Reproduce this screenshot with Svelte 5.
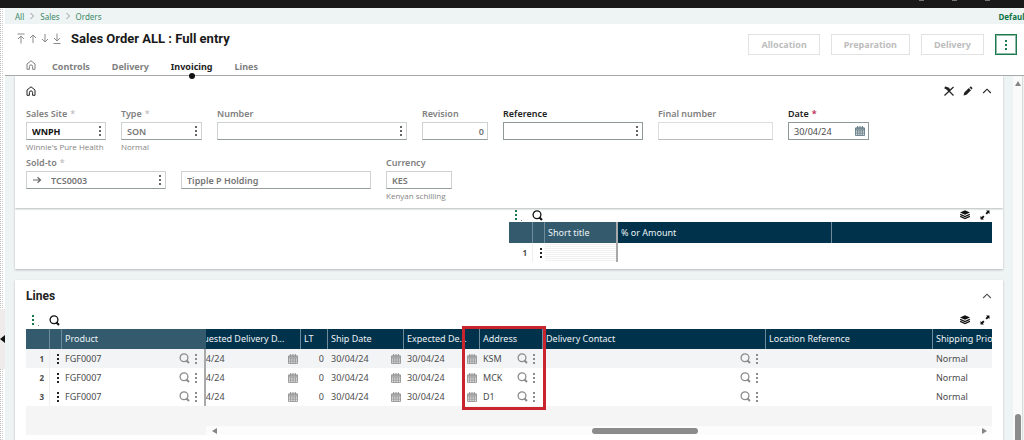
<script>
    import { onMount } from 'svelte';

    const crumbs = ['All', 'Sales', 'Orders'];
    const tabs = ['Controls', 'Delivery', 'Invoicing', 'Lines'];
    const actions = ['Allocation', 'Preparation', 'Delivery'];

    const firstRow = [
        { id: 'site', label: 'Sales Site', value: 'WNPH', help: "Winnie's Pure Health", size: 'w80', star: true, menu: true, look: 'strong' },
        { id: 'type', label: 'Type', value: 'SON', help: 'Normal', size: 'w81', star: true, menu: true },
        { id: 'number', label: 'Number', value: '', size: 'w190', menu: true },
        { id: 'revision', label: 'Revision', value: '0', size: 'w66', look: 'right' },
        { id: 'reference', label: 'Reference', value: '', size: 'w140', menu: true, look: 'editable' },
        { id: 'final', label: 'Final number', value: '', size: 'w115', look: 'faint' },
        { id: 'date', label: 'Date', value: '30/04/24', size: 'w81', star: true, calendar: true, look: 'editable' }
    ];

    const secondRow = [
        { id: 'soldto', label: 'Sold-to', value: 'TCS0003', size: 'w140', star: true, menu: true, arrow: true },
        { id: 'soldname', label: '', aria: 'Sold-to name', value: 'Tipple P Holding', size: 'w190' },
        { id: 'currency', label: 'Currency', value: 'KES', help: 'Kenyan schilling', size: 'w66' }
    ];

    const lines = [
        { product: 'FGF0007', requested: '30/04/24', lt: 0, ship: '30/04/24', expected: '30/04/24', address: 'KSM', priority: 'Normal' },
        { product: 'FGF0007', requested: '30/04/24', lt: 0, ship: '30/04/24', expected: '30/04/24', address: 'MCK', priority: 'Normal' },
        { product: 'FGF0007', requested: '30/04/24', lt: 0, ship: '30/04/24', expected: '30/04/24', address: 'D1', priority: 'Normal' }
    ];

    let activeTab = $state('Invoicing');
    let scroller;

    // start with the first column partly scrolled out
    onMount(() => {
        scroller.scrollLeft = 22;
    });
</script>

{#snippet dots()}
    <svg class="dots" viewBox="0 0 4 12" width="4" height="12" fill="currentColor">
        <rect x="1" y="1" width="2" height="2" /><rect x="1" y="5" width="2" height="2" /><rect x="1" y="9" width="2" height="2" />
    </svg>
{/snippet}

{#snippet house()}
    <svg viewBox="0 0 10 10" width="10" height="10" fill="none" stroke="currentColor">
        <path d="M1 9.300V4L5 .8 9 4v5.300H6.600V6.500a1.600 1.600 0 0 0-3.200 0v2.800z" />
    </svg>
{/snippet}

{#snippet search()}
    <svg viewBox="0 0 11 11" width="11" height="11" fill="none" stroke="currentColor" stroke-width="1.300">
        <circle cx="5" cy="4.800" r="3.900" /><path d="M7.200 7.200l2.800 2.800" stroke-width="2" />
    </svg>
{/snippet}

{#snippet calendar()}
    <svg class="cal" viewBox="0 0 10 10" width="10" height="10">
        <path d="M.5 2h9v7.500h-9z M.5 4.200h9M.5 6h9M.5 7.800h9M2.700 4v5.500M5 4v5.500M7.300 4v5.500" fill="none" stroke="currentColor" stroke-width=".8" />
        <path d="M.5 1.500h9V4h-9z" fill="currentColor" opacity=".6" />
        <path d="M2.700 0v2.500M7.300 0v2.500M5 0v2.500" stroke="currentColor" />
    </svg>
{/snippet}

{#snippet chevron()}
    <svg viewBox="0 0 10 10" width="10" height="10" fill="none" stroke="currentColor" stroke-width="1.100">
        <path d="M1.200 7L5 3.200 8.800 7" />
    </svg>
{/snippet}

{#snippet gridTools()}
    <div class="grid-tools">
        <button class="icon green" aria-label="Grid menu">{@render dots()}<i></i></button>
        <button class="icon" aria-label="Search">{@render search()}</button>
        <span class="spacer"></span>
        <button class="icon" aria-label="Layers">
            <svg viewBox="0 0 10 10" width="10" height="10">
                <path d="M5 .3l5 2.200-5 2.300L0 2.500z" fill="currentColor" />
                <path d="M.2 4.400L5 6.600l4.800-2.200M.2 6.400L5 8.600l4.800-2.200" fill="none" stroke="currentColor" stroke-width="1.200" />
            </svg>
        </button>
        <button class="icon expand" aria-label="Expand">
            <svg viewBox="0 0 10 10" width="10" height="10" fill="currentColor">
                <path d="M6 .5h3.500V4L8.400 3 6.800 4.500l-1.300-1.300L7.100 1.600zM4 9.500H.5V6l1.100 1 1.600-1.500 1.300 1.300-1.600 1.600z" />
            </svg>
        </button>
    </div>
{/snippet}

{#snippet field(f)}
    <div class="field {f.size} {f.look ?? ''}">
        <label for={f.id}>{f.label}{#if f.star}<b>*</b>{/if}</label>
        <div class="box">
            {#if f.arrow}
                <svg class="go" viewBox="0 0 10 8" width="10" height="8" fill="none" stroke="currentColor" stroke-width="1.200"><path d="M1 4h7M5.500 1.200L8.500 4l-3 2.800" /></svg>
            {/if}
            <input id={f.id} type="text" value={f.value} aria-label={f.aria} />
            {#if f.menu}<button class="icon" aria-label="{f.label} options">{@render dots()}</button>{/if}
            {#if f.calendar}<button class="icon" aria-label="Pick date">{@render calendar()}</button>{/if}
        </div>
        <small>{f.help ?? ''}</small>
    </div>
{/snippet}

{#snippet pick()}
    <span class="pick">{@render search()}{@render dots()}</span>
{/snippet}

<div class="page">
    <div class="topbar">
        <i></i><i></i><i></i>
    </div>
    <div class="shell">
        <aside>
            <button class="handle" aria-label="Open side panel"></button>
        </aside>
        <main>
            <nav class="crumbs">
                {#each crumbs as crumb, i}
                    {#if i > 0}
                        <svg viewBox="0 0 6 8" width="6" height="8" fill="none" stroke="currentColor"><path d="M1.500 1l3 3-3 3" /></svg>
                    {/if}
                    <a href="#{crumb}">{crumb}</a>
                {/each}
                <strong>Default</strong>
            </nav>

            <header>
                <div class="heading">
                    <div class="title-row">
                        <div class="arrows">
                            <button class="icon" aria-label="First"><svg viewBox="0 0 8 11" width="8" height="11"><path d="M.5 1h7M4 10.500V3M1 6l3-3 3 3" /></svg></button>
                            <button class="icon" aria-label="Previous"><svg viewBox="0 0 8 11" width="8" height="11"><path d="M4 10V2M1 5l3-3 3 3" /></svg></button>
                            <button class="icon" aria-label="Next"><svg viewBox="0 0 8 11" width="8" height="11"><path d="M4 1v8M1 6l3 3 3-3" /></svg></button>
                            <button class="icon" aria-label="Last"><svg viewBox="0 0 8 11" width="8" height="11"><path d="M.5 10.500h7M4 .5V8M1 5l3 3 3-3" /></svg></button>
                        </div>
                        <h1>Sales Order ALL : Full entry</h1>
                    </div>
                    <div class="tabs">
                        <button class="icon home" aria-label="Home">{@render house()}</button>
                        {#each tabs as tab}
                            <button class="tab" class:active={activeTab === tab} onclick={() => (activeTab = tab)}>{tab}</button>
                        {/each}
                    </div>
                </div>
                <div class="actions">
                    {#each actions as action}
                        <button disabled>{action}</button>
                    {/each}
                    <button class="more" aria-label="More actions">{@render dots()}</button>
                </div>
            </header>

            <div class="body">
                <div class="content">
                    <section class="card panel">
                        <div class="panel-tools">
                            <button class="icon" aria-label="Home">{@render house()}</button>
                            <span class="spacer"></span>
                            <button class="icon" aria-label="Unpin">
                                <svg viewBox="0 0 10 10" width="10" height="10" fill="none" stroke="currentColor"><path d="M1 1l8.500 8.500M.5 9.500L9.500 1" stroke-width="1.200" /><path d="M.8 1.500l3.500 1.300 1 2.200" stroke-width="2.400" /></svg>
                            </button>
                            <button class="icon" aria-label="Edit">
                                <svg viewBox="0 0 10 10" width="10" height="10" fill="currentColor"><path d="M.5 9.500l.8-3L5.800 2l2.200 2.200-4.500 4.500zM6.500 1.400l.9-.9c.5-.4 2.400 1.500 2 2l-.8.900z" /></svg>
                            </button>
                            <button class="icon" aria-label="Collapse">{@render chevron()}</button>
                        </div>
                        <div class="fields">
                            {#each firstRow as f}{@render field(f)}{/each}
                        </div>
                        <div class="fields">
                            {#each secondRow as f}{@render field(f)}{/each}
                        </div>
                    </section>

                    <section class="card charges">
                        <div class="half">
                            {@render gridTools()}
                            <table class="charge-grid">
                                <colgroup><col class="c-num" /><col class="c-menu" /><col class="c-title" /><col /><col class="c-rest" /></colgroup>
                                <thead>
                                    <tr><th class="soft"></th><th class="soft"></th><th class="soft edge">Short title</th><th>% or Amount</th><th></th></tr>
                                </thead>
                                <tbody>
                                    <tr><td class="num">1</td><td class="menu">{@render dots()}</td><td class="edge hatch"></td><td></td><td></td></tr>
                                </tbody>
                            </table>
                        </div>
                    </section>

                    <section class="card lines">
                        <div class="lines-head">
                            <h2>Lines</h2>
                            <button class="icon" aria-label="Collapse lines">{@render chevron()}</button>
                        </div>
                        {@render gridTools()}
                        <div class="grid">
                            <div class="frozen">
                                <table>
                                    <colgroup><col class="c-num" /><col class="c-menu" /><col /></colgroup>
                                    <thead>
                                        <tr><th class="soft"></th><th class="soft"></th><th class="soft">Product</th></tr>
                                    </thead>
                                    <tbody>
                                        {#each lines as line, i}
                                            <tr class:current={i === 0}>
                                                <td class="num">{i + 1}</td>
                                                <td class="menu">{@render dots()}</td>
                                                <td class="edge"><div class="cell">{line.product}{@render pick()}</div></td>
                                            </tr>
                                        {/each}
                                    </tbody>
                                </table>
                            </div>
                            <div class="scrolling">
                                <div class="viewport" bind:this={scroller}>
                                    <table>
                                        <colgroup>
                                            <col class="c-req" /><col class="c-lt" /><col class="c-date" /><col class="c-date" />
                                            <col class="c-addr" /><col class="c-contact" /><col class="c-loc" /><col class="c-prio" />
                                        </colgroup>
                                        <thead>
                                            <tr>
                                                <th>Requested Delivery D...</th><th>LT</th><th>Ship Date</th><th>Expected De...</th>
                                                <th>Address</th><th>Delivery Contact</th><th>Location Reference</th><th>Shipping Priority</th>
                                            </tr>
                                        </thead>
                                        <tbody>
                                            {#each lines as line, i}
                                                <tr class:current={i === 0}>
                                                    <td><div class="cell">{line.requested}{@render calendar()}</div></td>
                                                    <td class="right">{line.lt}</td>
                                                    <td><div class="cell">{line.ship}{@render calendar()}</div></td>
                                                    <td><div class="cell">{line.expected}{@render calendar()}</div></td>
                                                    <td><div class="cell">{line.address}{@render pick()}</div></td>
                                                    <td><div class="cell">{@render pick()}</div></td>
                                                    <td></td>
                                                    <td>{line.priority}</td>
                                                </tr>
                                            {/each}
                                        </tbody>
                                    </table>
                                </div>
                                <div class="hbar"><i class="left"></i><span><b></b></span><i class="right"></i></div>
                                <div class="marker"></div>
                            </div>
                        </div>
                    </section>
                </div>
                <div class="vbar"><i></i><b></b></div>
            </div>
        </main>
    </div>
</div>

<style>
    :global(body) {
        font-family: "Noto Sans", "Open Sans", sans-serif;
        font-size: 9px;
        color: #4c4c4c;
        background: #fff;
    }

    .page {
        height: 100vh;
        display: flex;
        flex-direction: column;
        overflow: hidden;
    }

    button {
        font: inherit;
        color: inherit;
        cursor: pointer;
    }

    svg {
        display: block;
        flex: none;
    }

    .icon {
        display: flex;
        align-items: center;
        padding: 0;
        border: 0;
        background: none;
    }

    .spacer {
        flex: 1;
    }

    .topbar {
        flex: none;
        display: flex;
        justify-content: flex-end;
        gap: 28px;
        height: 8px;
        padding-right: 34px;
        background: #191919;
    }

    .topbar i {
        width: 5px;
        height: 1px;
        background: #777;
    }

    .shell {
        flex: 1;
        display: flex;
        min-height: 0;
    }

    aside {
        flex: none;
        display: flex;
        align-items: center;
        width: 5px;
        padding-top: 230px;
        background: repeating-linear-gradient(#fff 0 1px, transparent 1px 2px), linear-gradient(90deg, #bbb 0 1px, #fff 1px 2px, #ccc 2px 3px, #fff 3px);
    }

    .handle {
        flex: none;
        width: 5px;
        height: 60px;
        padding: 0;
        border: 0;
        background: #efebeb;
    }

    .handle::before {
        content: "";
        display: block;
        border: solid transparent;
        border-width: 4px 5px 4px 0;
        border-right-color: #111;
    }

    main {
        flex: 1;
        display: flex;
        flex-direction: column;
        min-width: 0;
        background: #eef3f4;
    }

    .crumbs {
        flex: none;
        display: flex;
        align-items: center;
        gap: 5px;
        height: 16px;
        padding-left: 10px;
        font-size: 8px;
        color: #999;
    }

    .crumbs a {
        color: #3d8a66;
        text-decoration: none;
    }

    .crumbs strong {
        margin-left: auto;
        margin-right: -4px;
        color: #0f7446;
    }

    header {
        position: relative;
        z-index: 1;
        flex: none;
        display: flex;
        justify-content: space-between;
        height: 51px;
        border-bottom: 1px solid #a5a9aa;
        background: #fff;
    }

    .title-row {
        display: flex;
        align-items: center;
        gap: 10px;
        height: 29px;
        padding-left: 12px;
    }

    .arrows {
        display: flex;
        gap: 4px;
    }

    .arrows svg {
        fill: none;
        stroke: #8a8a8a;
    }

    h1 {
        margin: 0;
        font: bold 13px Roboto, "Liberation Sans", sans-serif;
        color: #191919;
    }

    .tabs {
        display: flex;
        gap: 22px;
        height: 24px;
        padding-left: 21px;
        color: #808080;
    }

    .home {
        margin-right: -6px;
    }

    .tab {
        position: relative;
        padding: 0;
        border: 0;
        background: none;
        line-height: 27px;
        font-weight: 700;
    }

    .tab.active {
        color: #222;
    }

    .tab.active::after {
        content: "";
        position: absolute;
        left: 50%;
        bottom: -2px;
        width: 6px;
        height: 6px;
        margin-left: -3px;
        border-radius: 50%;
        background: #111;
    }

    .actions {
        display: flex;
        gap: 11px;
        padding: 10px 7px 0 0;
    }

    .actions button {
        height: 21px;
        padding: 0 12px;
        border: 1px solid #e2e2e2;
        background: #fff;
        font-weight: 700;
        color: #bdbdbd;
    }

    .actions .more {
        width: 22px;
        padding: 0 8px;
        border-color: #1d7a50;
        outline: 1px solid #8fbca6;
        outline-offset: -2px;
        color: #1d7a50;
    }

    .body {
        flex: 1;
        display: flex;
        min-height: 0;
    }

    .content {
        flex: 1;
        display: flex;
        flex-direction: column;
        min-width: 0;
        padding: 0 10px;
    }

    .card {
        flex: none;
        box-sizing: border-box;
        padding: 0 11px;
        background: #fff;
        box-shadow: 0 1px 2px #b4babc;
    }

    .panel {
        position: relative;
        height: 132px;
    }

    .panel-tools {
        display: flex;
        align-items: center;
        gap: 9px;
        height: 30px;
        color: #222;
    }

    .fields {
        display: flex;
        gap: 15px;
    }

    .field label {
        display: block;
        height: 16px;
        line-height: 16px;
        font-weight: 600;
        color: #808080;
        white-space: nowrap;
    }

    label b {
        margin-left: 3px;
        font-weight: 400;
        color: #b5b5b5;
    }

    .box {
        display: flex;
        align-items: center;
        box-sizing: border-box;
        height: 18px;
        padding: 0 3px 0 5px;
        border: 1px solid #cdd1d1;
        border-bottom-color: #959c9c;
        color: #666;
    }

    .box input {
        flex: 1;
        min-width: 0;
        padding: 0;
        border: 0;
        outline: 0;
        background: none;
        font: inherit;
        font-weight: 600;
        color: #757575;
    }

    .go {
        margin-right: 9px;
    }

    small {
        display: block;
        width: 90px;
        height: 15px;
        line-height: 14px;
        font-family: "Open Sans", "Noto Sans", sans-serif;
        font-size: 8px;
        color: #858585;
        white-space: nowrap;
    }

    .w66 { width: 66px; }
    .w80 { width: 80px; }
    .w81 { width: 81px; }
    .w115 { width: 115px; }
    .w140 { width: 140px; }
    .w190 { width: 190px; }

    .strong input {
        font-weight: 700;
        color: #111;
    }

    .right input {
        text-align: right;
    }

    .editable label {
        color: #222;
    }

    .editable label b {
        font-weight: 700;
        color: #c0345a;
    }

    .editable .box {
        border-color: #8e9999;
    }

    .editable input {
        font-weight: 400;
        color: #4c4c4c;
    }

    .faint .box {
        border-color: #ddd;
        border-bottom-color: #bbb;
    }

    .box .cal {
        color: #55707a;
    }

    .charges {
        height: 61px;
    }

    .half {
        width: 50%;
        margin-left: auto;
    }

    .charges .grid-tools {
        height: 14px;
    }

    .grid-tools {
        display: flex;
        align-items: center;
        gap: 10px;
        height: 18px;
        padding-left: 5px;
        color: #111;
    }

    .grid-tools .green {
        color: #16794c;
    }

    .green i {
        align-self: flex-end;
        width: 1px;
        height: 1px;
        margin-left: 3px;
        background: #888;
    }

    .expand {
        padding-right: 2px;
    }

    table {
        width: 100%;
        table-layout: fixed;
        border-collapse: separate;
        border-spacing: 0;
    }

    th, td {
        box-sizing: border-box;
        height: 19px;
        padding: 0 3px;
        line-height: 19px;
        font-weight: 400;
        text-align: left;
        white-space: nowrap;
        overflow: hidden;
    }

    th {
        height: 20px;
        line-height: 20px;
        background: #00324c;
        border-right: 1px solid #6d8b9a;
        color: #eef3f5;
    }

    .charge-grid th {
        height: 21px;
    }

    th:last-child {
        border-right: 0;
    }

    .charge-grid .soft, .soft {
        background: #335b6d;
    }

    .edge {
        padding-right: 2px;
        border-right: 2px solid #a9a9a9;
    }

    .num {
        padding-right: 5px;
        font-size: 8px;
        font-weight: 700;
        text-align: right;
        border-right: 1px solid #eee;
    }

    .menu {
        padding-left: 6px;
        color: #222;
    }

    .hatch {
        background: repeating-linear-gradient(#fff 0 1px, #f1f1f1 1px 2px);
    }

    td.right {
        padding-right: 4px;
        text-align: right;
    }

    .cell {
        display: flex;
        align-items: center;
        justify-content: space-between;
        height: 19px;
    }

    .cell .cal, .pick {
        color: #8c8c8c;
    }

    .pick {
        display: flex;
        gap: 4px;
        margin-left: auto;
        padding-right: 4px;
    }

    .c-num { width: 24px; }
    .c-menu { width: 12px; }
    .c-title { width: 73px; }
    .c-rest { width: 160px; }
    .c-req { width: 117px; }
    .c-lt { width: 27px; }
    .c-date { width: 76px; }
    .c-addr { width: 63px; }
    .c-contact { width: 223px; }
    .c-loc { width: 167px; }
    .c-prio { width: 110px; }

    .lines {
        flex: 1;
        margin-top: 11px;
    }

    .lines-head {
        display: flex;
        align-items: center;
        justify-content: space-between;
        height: 31px;
    }

    h2 {
        margin: 0;
        font: bold 12px Roboto, "Liberation Sans", sans-serif;
        color: #222;
    }

    .grid {
        display: flex;
    }

    .frozen {
        flex: none;
        width: 180px;
        height: 106px;
        background: #f5f5f5;
    }

    .frozen td, .viewport td {
        background: #fff;
    }

    .frozen .current td, .viewport .current td {
        background: #f2f4f5;
    }

    .scrolling {
        position: relative;
        flex: 1;
        min-width: 0;
    }

    .viewport {
        height: 97px;
        overflow: hidden;
        background: #f5f5f5;
    }

    .viewport table {
        width: 859px;
    }

    .hbar {
        display: flex;
        align-items: center;
        gap: 4px;
        height: 9px;
        padding: 0 5px 0 6px;
        background: #fcfcfc;
    }

    .hbar i {
        border: solid transparent;
        border-width: 3px 5px 3px 0;
        border-right-color: #858585;
    }

    .hbar i.right {
        border-width: 3px 0 3px 5px;
        border-left-color: #858585;
    }

    .hbar span {
        flex: 1;
    }

    .hbar b {
        display: block;
        width: 14%;
        height: 6px;
        margin-left: 49%;
        border-radius: 3px;
        background: #8b8b8b;
    }

    .marker {
        position: absolute;
        left: 256px;
        top: -3px;
        width: 78px;
        height: 78px;
        border: 3px solid #c9252e;
        pointer-events: none;
    }

    .vbar {
        flex: none;
        display: flex;
        flex-direction: column;
        align-items: center;
        justify-content: space-between;
        width: 9px;
        margin-right: 1px;
        padding-top: 5px;
        border-right: 1px solid #dcdcdc;
        background: #fafafa;
    }

    .vbar i {
        border: solid transparent;
        border-width: 0 3px 5px;
        border-bottom-color: #858585;
    }

    .vbar b {
        width: 6px;
        height: 26px;
        border-radius: 3px 3px 0 0;
        background: #8b8b8b;
    }
</style>
